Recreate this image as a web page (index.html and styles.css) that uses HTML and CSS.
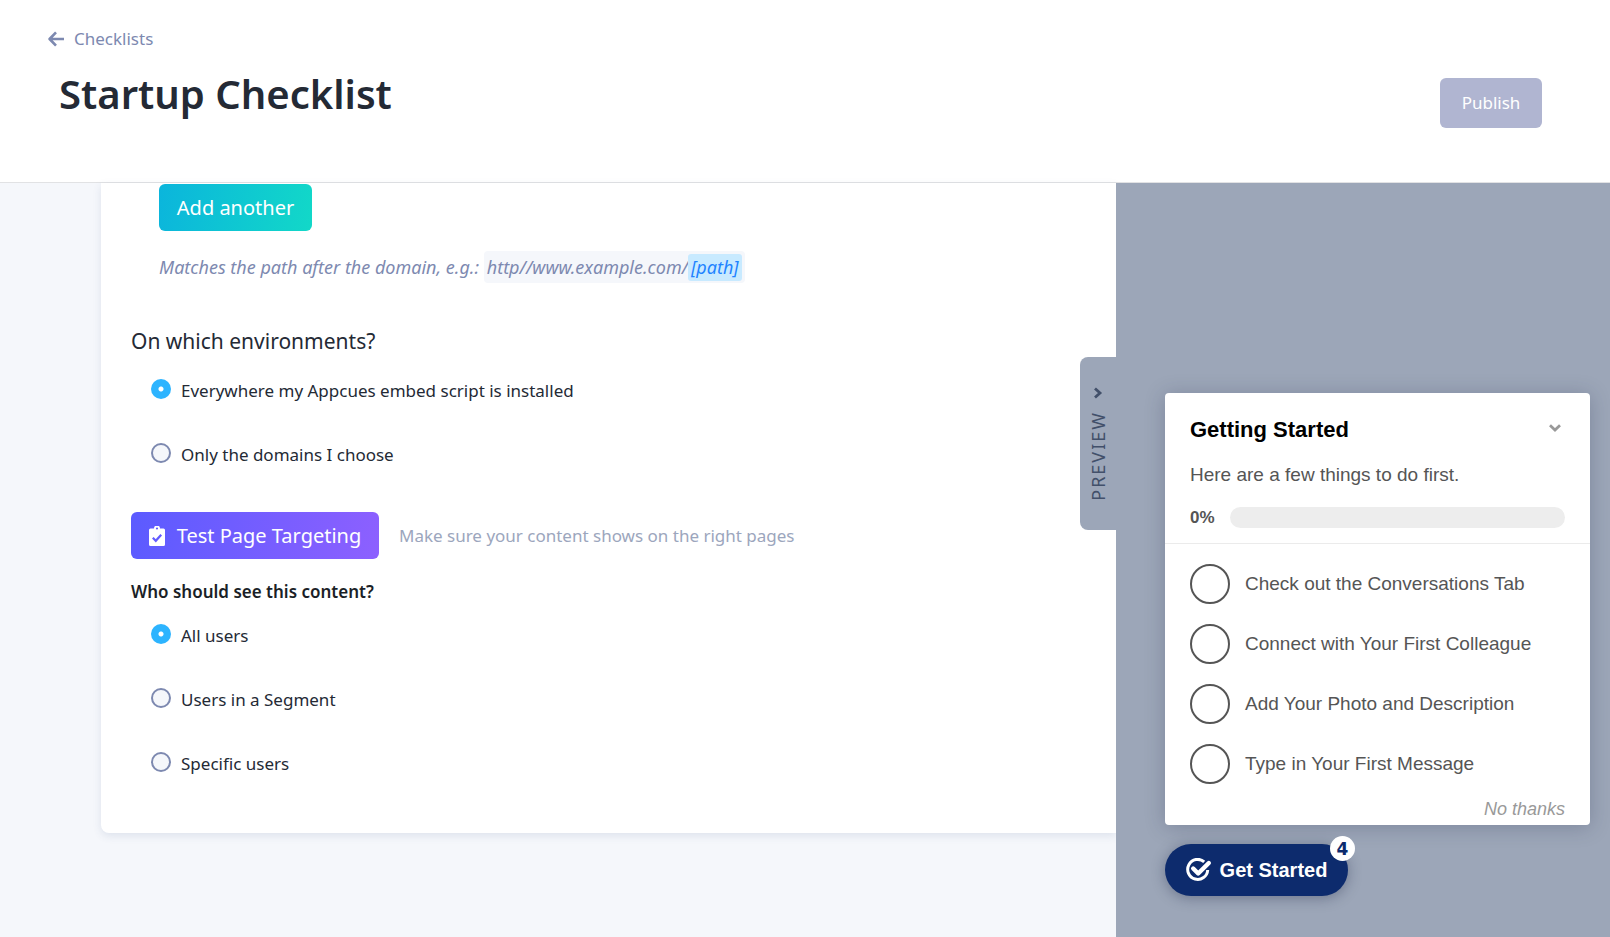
FILE: index.html
```html
<!DOCTYPE html>
<html lang="en">
<head>
<meta charset="utf-8">
<title>Startup Checklist</title>
<link rel="stylesheet" href="styles.css">
</head>
<body>
<header class="header">
  <a class="back" href="#">
    <svg class="back-icon" width="16" height="16" viewBox="0 0 16 16" fill="none" stroke="currentColor" stroke-width="2.6" stroke-linejoin="round"><path d="M8 1.300 1.600 8l6.400 6.700M1.600 8H16"/></svg>
    Checklists
  </a>
  <div class="title-row">
    <h1 class="title">Startup Checklist</h1>
    <button class="publish" type="button">Publish</button>
  </div>
</header>
<main class="main">
  <section class="settings">
    <div class="card">
      <div class="path-rule">
        <button class="btn btn-add" type="button">Add another</button>
        <p class="hint">Matches the path after the domain, e.g.: <span class="url">http//www.example.com/<span class="url-path">[path]</span></span></p>
      </div>
      <fieldset class="group">
        <legend class="question">On which environments?</legend>
        <label class="option"><input class="radio" type="radio" name="env" checked><span>Everywhere my Appcues embed script is installed</span></label>
        <label class="option"><input class="radio" type="radio" name="env"><span>Only the domains I choose</span></label>
      </fieldset>
      <div class="test-row">
        <button class="btn btn-test" type="button">
          <svg width="16" height="20" viewBox="0 0 16 20"><path fill="#fff" fill-rule="evenodd" d="M1.500 2.500H5a3 3 0 0 1 6 0h3.500a1.500 1.500 0 0 1 1.500 1.500V18.500a1.500 1.500 0 0 1-1.500 1.500h-13A1.500 1.500 0 0 1 0 18.500V4a1.500 1.500 0 0 1 1.500-1.500zM8 1.400a1.100 1.100 0 1 0 0 2.200a1.100 1.100 0 0 0 0-2.200z"/><path d="M3.800 11.800l3 3 5.400-6" fill="none" stroke="#635bff" stroke-width="2.200"/></svg>
          Test Page Targeting
        </button>
        <span class="test-note">Make sure your content shows on the right pages</span>
      </div>
      <fieldset class="group group-users">
        <legend class="question-strong">Who should see this content?</legend>
        <label class="option"><input class="radio" type="radio" name="who" checked><span>All users</span></label>
        <label class="option"><input class="radio" type="radio" name="who"><span>Users in a Segment</span></label>
        <label class="option"><input class="radio" type="radio" name="who"><span>Specific users</span></label>
      </fieldset>
    </div>
  </section>
  <aside class="preview">
    <button class="preview-tab" type="button">
      <span class="preview-label">PREVIEW</span>
      <svg width="10" height="12" viewBox="0 0 10 12" fill="none" stroke="currentColor" stroke-width="2.800"><path d="M2 1.500 7 6l-5 4.500"/></svg>
    </button>
    <div class="checklist">
      <div class="checklist-head">
        <div class="checklist-top">
          <h2 class="checklist-title">Getting Started</h2>
          <button class="collapse" type="button" aria-label="Collapse"><svg width="12" height="8" viewBox="0 0 12 8" fill="none" stroke="currentColor" stroke-width="2.800"><path d="M1 1.300l5 4.700 5-4.700"/></svg></button>
        </div>
        <p class="checklist-intro">Here are a few things to do first.</p>
        <div class="progress"><span class="percent">0%</span><div class="bar"></div></div>
      </div>
      <ul class="items">
        <li class="item"><span class="circle"></span>Check out the Conversations Tab</li>
        <li class="item"><span class="circle"></span>Connect with Your First Colleague</li>
        <li class="item"><span class="circle"></span>Add Your Photo and Description</li>
        <li class="item"><span class="circle"></span>Type in Your First Message</li>
      </ul>
      <a class="dismiss" href="#">No thanks</a>
    </div>
    <button class="launcher" type="button">
      <svg width="26" height="24" viewBox="0 0 26 24" fill="none" stroke="#fff"><path stroke-width="3" d="M18.200 3.800A10 10 0 1 0 21.700 12"/><path stroke-width="4.400" stroke-linecap="round" stroke-linejoin="round" d="M7.200 10.500l5 5L22.800 5"/></svg>
      Get Started
      <span class="badge">4</span>
    </button>
  </aside>
</main>
</body>
</html>
```
FILE: styles.css
```css
* { box-sizing: border-box; }
body { margin: 0; min-height: 100vh; display: flex; flex-direction: column; font-family: "Noto Sans", sans-serif; font-size: 17px; line-height: 24px; color: #242a35; background: #f5f7fb; }
button { border: 0; padding: 0; font: inherit; cursor: pointer; }
h1, h2, p, ul, fieldset { margin: 0; padding: 0; border: 0; }
legend { padding: 0; }

.header { padding: 27px 68px 54px 48px; background: #fff; border-bottom: 1px solid #e1e2e4; }
.back { display: inline-flex; align-items: center; gap: 10px; color: #7d89b0; text-decoration: none; }
.title-row { display: flex; align-items: flex-end; justify-content: space-between; padding-left: 11px; margin-top: 13px; }
.title { align-self: flex-start; font-size: 40px; line-height: 56px; font-weight: 600; }
.publish { width: 102px; height: 50px; margin-top: 12px; border-radius: 6px; background: #b0b5d1; color: #fff; }

.main { flex: 1; display: flex; }
.settings { flex: 1; padding-left: 101px; }
.card { padding: 1px 30px 17px; background: #fff; border-radius: 0 0 0 8px; box-shadow: 0 3px 8px rgba(60, 80, 130, 0.12); }
.path-rule { padding-left: 28px; }
.btn { display: inline-flex; align-items: center; justify-content: center; height: 47px; border-radius: 6px; color: #fff; font-size: 20px; }
.btn-add { width: 153px; background: linear-gradient(100deg, #0bb5dc, #12d8c8); }
.hint { margin-top: 20px; font-size: 18px; line-height: 32px; font-style: italic; color: #7d89b0; }
.url { display: inline-block; padding: 0 3px; border-radius: 4px; background: #f5f7fb; }
.url-path { display: inline-block; padding: 0 3px; line-height: 27px; border-radius: 3px; background: #c8eaff; color: #1e83ff; }
.question { font-size: 21px; line-height: 28px; padding-top: 44px; margin-bottom: 24px; }
.group-users { padding-top: 0; margin-top: 21px; }
.question-strong { font-weight: 600; margin-bottom: 20px; line-height: 24px; color: #1b1f27; }
.option { display: flex; align-items: flex-start; gap: 10px; width: max-content; margin: 0 0 40px 20px; line-height: 24px; }
.radio { appearance: none; width: 20px; height: 20px; margin: 0; border: 2px solid #7d89b0; border-radius: 50%; background: #f5f7fb; }
.radio:checked { border: 0; background: radial-gradient(circle, #fff 2px, #2db4ff 3px); }
.test-row { display: flex; align-items: center; gap: 20px; margin-top: 5px; }
.btn-test { width: 248px; gap: 12px; background: linear-gradient(100deg, #5b5bff, #8d60ff); }
.test-note { color: #9ca6bd; }

.preview { position: relative; flex: 0 0 494px; display: flex; flex-direction: column; justify-content: flex-end; align-items: flex-start; gap: 19px; padding: 0 20px 41px 49px; background: #9ca6b8; font-family: "Liberation Sans", Arial, sans-serif; }
.preview-tab { position: absolute; left: -36px; top: 174px; width: 36px; height: 173px; display: flex; flex-direction: column-reverse; align-items: center; justify-content: center; gap: 12px; border-radius: 8px 0 0 8px; background: #9ca6b8; color: #42506a; }
.preview-label { writing-mode: vertical-rl; transform: rotate(180deg); font-family: "Noto Sans", sans-serif; font-size: 18px; letter-spacing: 2px; }
.checklist { width: 100%; background: #fff; border-radius: 4px; box-shadow: 0 2px 20px rgba(30, 40, 70, 0.25); color: #555; font-size: 19px; }
.checklist-head { padding: 24px 25px 15px; border-bottom: 1px solid #ebebeb; }
.checklist-top { display: flex; justify-content: space-between; align-items: center; padding-right: 4px; }
.checklist-title { font-size: 22px; line-height: 26px; color: #000; }
.collapse { display: flex; margin-bottom: 4px; background: none; color: #999; }
.checklist-intro { margin-top: 20px; }
.progress { display: flex; align-items: center; gap: 15px; margin-top: 20px; }
.percent { width: 25px; font-size: 17px; line-height: 20px; font-weight: bold; }
.bar { flex: 1; height: 21px; border-radius: 11px; background: #ededed; }
.items { list-style: none; display: grid; gap: 20px; padding: 20px 25px 0; }
.item { display: flex; align-items: center; gap: 15px; }
.circle { width: 40px; height: 40px; border: 2px solid #555; border-radius: 50%; }
.dismiss { display: block; padding: 13px 25px 4px; text-align: right; font-size: 18px; font-style: italic; color: #999; text-decoration: none; }
.launcher { position: relative; display: flex; align-items: center; justify-content: center; gap: 8px; width: 183px; height: 52px; border-radius: 26px; background: #0d2b6d; box-shadow: 0 2px 14px rgba(20, 30, 60, 0.35); color: #fff; font-size: 20px; font-weight: bold; }
.badge { position: absolute; top: -8px; right: -7px; width: 25px; height: 25px; border-radius: 50%; background: #fff; color: #0d2b6d; font: bold 17px/27px "DejaVu Sans", sans-serif; }
```
